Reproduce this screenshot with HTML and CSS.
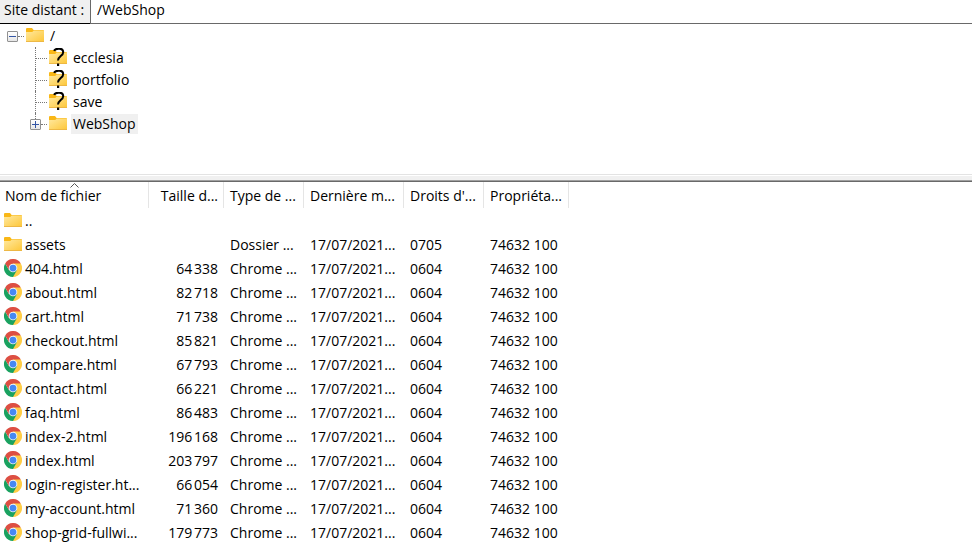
FILE: index.html
```
<!DOCTYPE html>
<html lang="fr">
<head>
<meta charset="utf-8">
<title>Site distant</title>
<link rel="stylesheet" href="styles.css">
</head>
<body>
<svg class="defs" aria-hidden="true">
  <defs>
    <linearGradient id="fold" x1="0" y1="0" x2="1" y2="1">
      <stop offset="0" stop-color="#ffe9a0"/>
      <stop offset="1" stop-color="#fdc73a"/>
    </linearGradient>
    <symbol id="folder" viewBox="0 0 18 18">
      <path d="M0 3.2Q0 2 1 2h5l1.600 2H17q1 0 1 1v3H0z" fill="#f9b716"/>
      <path d="M0 6h6.200l1.600-1.500H18V15.500H0z" fill="url(#fold)"/>
      <path d="M0 15.200h18v.8H0z" fill="#e9ac2c"/>
    </symbol>
    <symbol id="unknown" viewBox="0 0 18 18">
      <use href="#folder" width="18" height="18"/>
      <path d="M5 2.800C6.500 0 14.200-.6 14.200 4.200c0 3.800-5.200 4-5.200 8.300" fill="none" stroke="#000" stroke-width="2"/>
      <path d="M8 15.500h2.200V18H8z"/>
    </symbol>
    <symbol id="chrome" viewBox="0 0 48 48">
      <path d="M24 24 3.200 12A24 24 0 0 1 44.800 12z" fill="#dd4f43"/>
      <path d="M24 24V12h20.800A24 24 0 0 1 24 48z" fill="#ffcd46"/>
      <path d="M24 24 34.400 30 24 48A24 24 0 0 1 3.200 12L13.600 30z" fill="#1aa260"/>
      <path d="M3.200 12 13.600 30 24 24V12z" fill="#dd4f43"/>
      <circle cx="24" cy="24" r="11.500" fill="#f4f5f5"/>
      <circle cx="24" cy="24" r="9" fill="#4688f4"/>
    </symbol>
  </defs>
</svg>

<div class="path-bar">
  <label class="path-label" for="path">Site distant :</label>
  <input class="path-input" id="path" type="text" value="/WebShop">
</div>

<nav class="tree" aria-label="Dossiers distants">
  <div class="node">
    <button class="toggle" type="button" aria-label="Réduire"></button>
    <span class="branch"></span>
    <svg class="icon" aria-hidden="true"><use href="#folder"/></svg>
    <span class="node-name">/</span>
  </div>
  <ul class="children">
    <li class="node"><span class="branch leaf"></span><svg class="icon" aria-hidden="true"><use href="#unknown"/></svg><span class="node-name">ecclesia</span></li>
    <li class="node"><span class="branch leaf"></span><svg class="icon" aria-hidden="true"><use href="#unknown"/></svg><span class="node-name">portfolio</span></li>
    <li class="node"><span class="branch leaf"></span><svg class="icon" aria-hidden="true"><use href="#unknown"/></svg><span class="node-name">save</span></li>
    <li class="node"><button class="toggle plus" type="button" aria-label="Développer"></button><span class="branch"></span><svg class="icon" aria-hidden="true"><use href="#folder"/></svg><span class="node-name selected">WebShop</span></li>
  </ul>
</nav>

<div class="splitter"></div>

<table class="files">
  <colgroup><col class="c-name"><col class="c-size"><col class="c-type"><col class="c-date"><col class="c-rights"><col class="c-owner"><col></colgroup>
  <thead>
    <tr><th class="sorted">Nom de fichier<svg class="sort" viewBox="0 0 9 5" aria-hidden="true"><path d="M.5 4.500l4-4 4 4"/></svg></th><th class="num">Taille d...</th><th>Type de ...</th><th>Dernière m...</th><th>Droits d'...</th><th>Propriéta...</th><td></td></tr>
  </thead>
  <tbody>
    <tr><td><span class="file"><svg class="icon" aria-hidden="true"><use href="#folder"/></svg>..</span></td><td></td><td></td><td></td><td></td><td></td><td></td></tr>
    <tr><td><span class="file"><svg class="icon" aria-hidden="true"><use href="#folder"/></svg>assets</span></td><td></td><td>Dossier ...</td><td>17/07/2021...</td><td>0705</td><td>74632 100</td><td></td></tr>
    <tr><td><span class="file"><svg class="icon" aria-hidden="true"><use href="#chrome"/></svg>404.html</span></td><td class="num">64&#8239;338</td><td>Chrome ...</td><td>17/07/2021...</td><td>0604</td><td>74632 100</td><td></td></tr>
    <tr><td><span class="file"><svg class="icon" aria-hidden="true"><use href="#chrome"/></svg>about.html</span></td><td class="num">82&#8239;718</td><td>Chrome ...</td><td>17/07/2021...</td><td>0604</td><td>74632 100</td><td></td></tr>
    <tr><td><span class="file"><svg class="icon" aria-hidden="true"><use href="#chrome"/></svg>cart.html</span></td><td class="num">71&#8239;738</td><td>Chrome ...</td><td>17/07/2021...</td><td>0604</td><td>74632 100</td><td></td></tr>
    <tr><td><span class="file"><svg class="icon" aria-hidden="true"><use href="#chrome"/></svg>checkout.html</span></td><td class="num">85&#8239;821</td><td>Chrome ...</td><td>17/07/2021...</td><td>0604</td><td>74632 100</td><td></td></tr>
    <tr><td><span class="file"><svg class="icon" aria-hidden="true"><use href="#chrome"/></svg>compare.html</span></td><td class="num">67&#8239;793</td><td>Chrome ...</td><td>17/07/2021...</td><td>0604</td><td>74632 100</td><td></td></tr>
    <tr><td><span class="file"><svg class="icon" aria-hidden="true"><use href="#chrome"/></svg>contact.html</span></td><td class="num">66&#8239;221</td><td>Chrome ...</td><td>17/07/2021...</td><td>0604</td><td>74632 100</td><td></td></tr>
    <tr><td><span class="file"><svg class="icon" aria-hidden="true"><use href="#chrome"/></svg>faq.html</span></td><td class="num">86&#8239;483</td><td>Chrome ...</td><td>17/07/2021...</td><td>0604</td><td>74632 100</td><td></td></tr>
    <tr><td><span class="file"><svg class="icon" aria-hidden="true"><use href="#chrome"/></svg>index-2.html</span></td><td class="num">196&#8239;168</td><td>Chrome ...</td><td>17/07/2021...</td><td>0604</td><td>74632 100</td><td></td></tr>
    <tr><td><span class="file"><svg class="icon" aria-hidden="true"><use href="#chrome"/></svg>index.html</span></td><td class="num">203&#8239;797</td><td>Chrome ...</td><td>17/07/2021...</td><td>0604</td><td>74632 100</td><td></td></tr>
    <tr><td><span class="file"><svg class="icon" aria-hidden="true"><use href="#chrome"/></svg>login-register.ht...</span></td><td class="num">66&#8239;054</td><td>Chrome ...</td><td>17/07/2021...</td><td>0604</td><td>74632 100</td><td></td></tr>
    <tr><td><span class="file"><svg class="icon" aria-hidden="true"><use href="#chrome"/></svg>my-account.html</span></td><td class="num">71&#8239;360</td><td>Chrome ...</td><td>17/07/2021...</td><td>0604</td><td>74632 100</td><td></td></tr>
    <tr><td><span class="file"><svg class="icon" aria-hidden="true"><use href="#chrome"/></svg>shop-grid-fullwi...</span></td><td class="num">179&#8239;773</td><td>Chrome ...</td><td>17/07/2021...</td><td>0604</td><td>74632 100</td><td></td></tr>
  </tbody>
</table>
</body>
</html>
```
FILE: styles.css
```
* {
  box-sizing: border-box;
}

body {
  margin: 0;
  height: 100vh;
  overflow: hidden;
  background: #fff;
  color: #000;
  font: 14px/20px "Open Sans", "Noto Sans", sans-serif;
}

.defs {
  position: absolute;
  width: 0;
  height: 0;
}

.icon {
  flex: none;
  width: 18px;
  height: 18px;
  margin-bottom: 2px;
  overflow: visible;
}

/* Path bar */
.path-bar {
  display: flex;
  height: 24px;
}

.path-label {
  flex: none;
  width: 90px;
  padding-left: 4px;
  background: #f0f0f0;
  border-bottom: 1px solid #000;
  white-space: nowrap;
}

.path-input {
  flex: 1;
  min-width: 0;
  padding: 0 6px 3px;
  border: 0;
  border-left: 1px solid #696969;
  border-bottom: 1px solid #696969;
  border-radius: 0;
  outline: 0;
  background: #fff;
  color: inherit;
  font: inherit;
}

/* Folder tree */
.tree {
  height: 150px;
  padding: 1px 0 0 7px;
}

.children {
  margin: 0;
  padding: 0 0 0 23px;
  list-style: none;
}

.node {
  display: flex;
  align-items: center;
  height: 22px;
  position: relative;
}

.children .node::before {
  content: "";
  position: absolute;
  left: 5px;
  top: 0;
  height: 22px;
  border-left: 1px dotted #777;
}

.children .node:last-child::before {
  height: 6px;
}

.toggle {
  flex: none;
  width: 11px;
  height: 11px;
  padding: 0;
  border: 1px solid #919191;
  border-radius: 1px;
  background:
    linear-gradient(#3355a5, #3355a5) center / 7px 1px no-repeat,
    linear-gradient(#fff, #e6e6e6);
}

.toggle.plus {
  background:
    linear-gradient(#3355a5, #3355a5) center / 7px 1px no-repeat,
    linear-gradient(#3355a5, #3355a5) center / 1px 7px no-repeat,
    linear-gradient(#fff, #e6e6e6);
}

.branch {
  flex: none;
  width: 6px;
  margin-right: 2px;
  border-top: 1px dotted #777;
}

.branch.leaf {
  width: 12px;
  margin-left: 5px;
}

.node-name {
  margin-left: 4px;
  padding: 0 2px;
}

.selected {
  background: #f0f0f0;
}

/* Pane divider */
.splitter {
  height: 8px;
  border-top: 1px solid #e3e3e3;
  border-bottom: 1px solid #696969;
  background: linear-gradient(#fff 0 1px, #f0f0f0 1px 5px, #a0a0a0 5px);
}

/* File list */
.files {
  width: 100%;
  table-layout: fixed;
  border-collapse: separate;
  border-spacing: 0;
}

.c-name { width: 149px; }
.c-size { width: 75px; }
.c-type { width: 80px; }
.c-date { width: 100px; }
.c-rights { width: 80px; }
.c-owner { width: 85px; }

.files th,
.files td {
  height: 24px;
  padding: 0 0 0 6px;
  font-weight: 400;
  text-align: left;
  white-space: nowrap;
}

.files th {
  height: 26px;
  padding-top: 2px;
  border-right: 1px solid #e5e5e5;
}

.files thead::after {
  content: "";
  display: table-row;
  height: 1px;
}

.files .num {
  padding-right: 6px;
  text-align: right;
}

.files th.num {
  padding-right: 5px;
}

.files .sorted {
  position: relative;
  padding-left: 5px;
}

.sort {
  position: absolute;
  left: calc(50% - 4px);
  top: 1px;
  width: 9px;
  height: 5px;
  fill: none;
  stroke: #555;
}

.files tbody td:first-child {
  padding-left: 4px;
}

.file {
  display: flex;
  align-items: center;
  gap: 3px;
}
```
